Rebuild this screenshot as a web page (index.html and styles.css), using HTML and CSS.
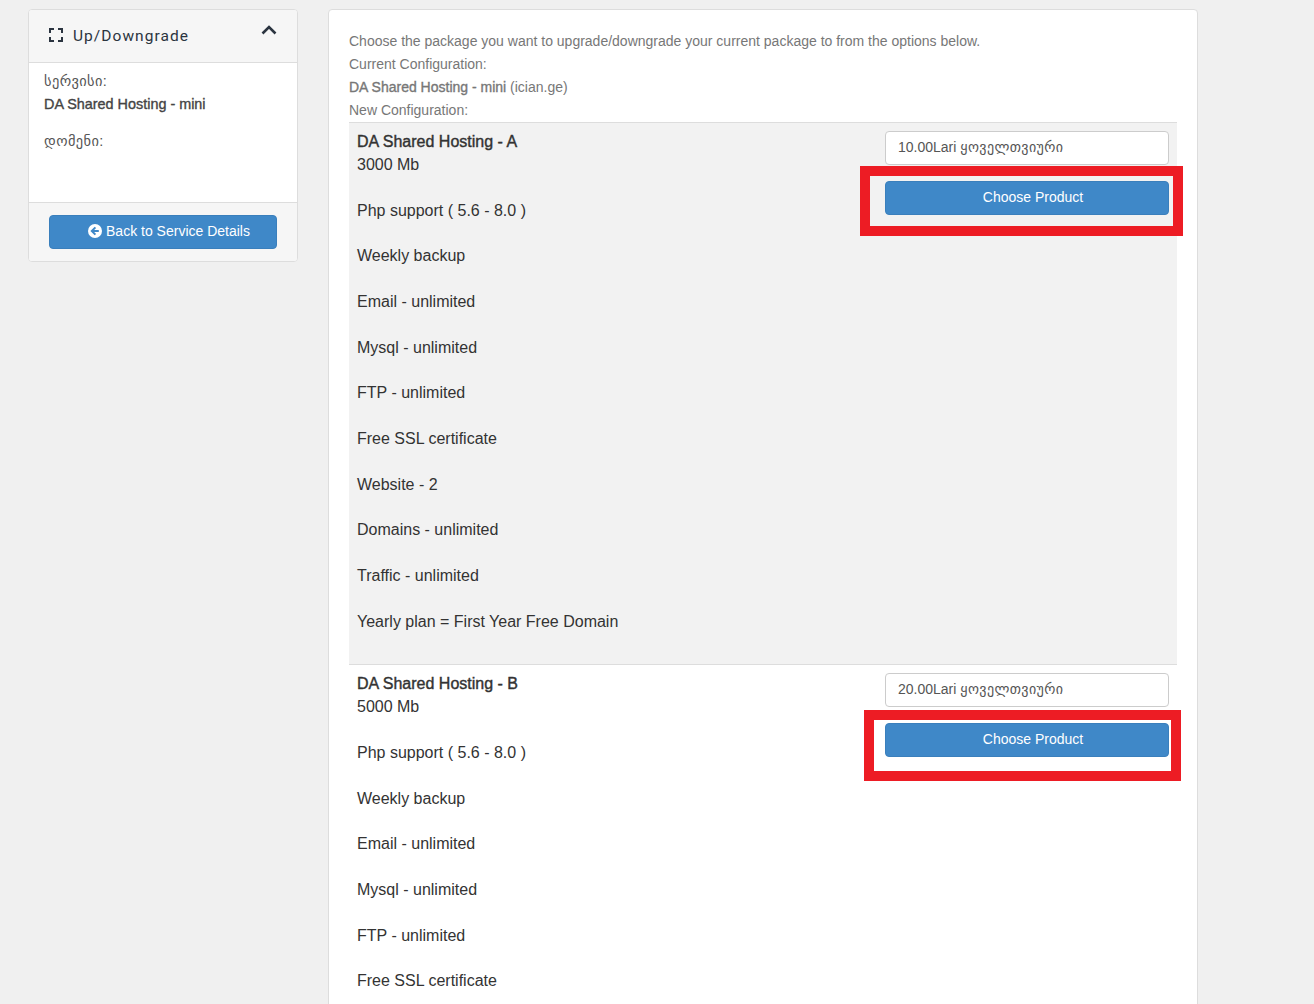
FILE: index.html
```html
<!DOCTYPE html>
<html lang="ka">
<head>
<meta charset="utf-8">
<title>Up/Downgrade</title>
<link rel="stylesheet" href="styles.css">
</head>
<body>
<div class="page">
  <aside class="side-card">
    <header class="side-head">
      <h3 class="side-title">
        <svg class="focus-icon" width="14" height="14" viewBox="0 0 14 14"><path d="M1 5V1H5M9 1H13V5M13 9V13H9M5 13H1V9" fill="none" stroke="#2b3440" stroke-width="2"/></svg>
        <span>Up/Downgrade</span>
      </h3>
      <svg class="chevron" width="16" height="10" viewBox="0 0 16 10"><path d="M1.5 8.5L8 2L14.5 8.5" fill="none" stroke="#2b3440" stroke-width="2.6"/></svg>
    </header>
    <div class="side-body">
      <div class="side-label">სერვისი:</div>
      <div class="side-value">DA Shared Hosting - mini</div>
      <div class="side-label side-gap">დომენი:</div>
    </div>
    <footer class="side-foot">
      <a class="btn side-btn">
        <svg class="back-icon" width="14" height="14" viewBox="0 0 14 14"><circle cx="7" cy="7" r="7" fill="#fff"/><path d="M7.4 3.4L3.8 7L7.4 10.6M4.2 7H10.8" fill="none" stroke="#3f88c8" stroke-width="2"/></svg>
        <span>Back to Service Details</span>
      </a>
    </footer>
  </aside>

  <main class="main-card">
    <div class="intro">
      <p>Choose the package you want to upgrade/downgrade your current package to from the options below.</p>
      <p>Current Configuration:</p>
      <p><strong>DA Shared Hosting - mini</strong> (ician.ge)</p>
      <p>New Configuration:</p>
    </div>

    <section class="plan plan-shaded">
      <div class="plan-info">
        <strong>DA Shared Hosting - A</strong><br>
        3000 Mb<br><br>
        Php support ( 5.6 - 8.0 )<br><br>
        Weekly backup<br><br>
        Email - unlimited<br><br>
        Mysql - unlimited<br><br>
        FTP - unlimited<br><br>
        Free SSL certificate<br><br>
        Website - 2<br><br>
        Domains - unlimited<br><br>
        Traffic - unlimited<br><br>
        Yearly plan = First Year Free Domain
      </div>
      <div class="plan-action">
        <div class="price-select"><span>10.00Lari <span class="geo">ყოველთვიური</span></span></div>
        <a class="btn choose-btn">Choose Product</a>
        <div class="mark mark-a"></div>
      </div>
    </section>

    <section class="plan">
      <div class="plan-info">
        <strong>DA Shared Hosting - B</strong><br>
        5000 Mb<br><br>
        Php support ( 5.6 - 8.0 )<br><br>
        Weekly backup<br><br>
        Email - unlimited<br><br>
        Mysql - unlimited<br><br>
        FTP - unlimited<br><br>
        Free SSL certificate
      </div>
      <div class="plan-action">
        <div class="price-select"><span>20.00Lari <span class="geo">ყოველთვიური</span></span></div>
        <a class="btn choose-btn">Choose Product</a>
        <div class="mark mark-b"></div>
      </div>
    </section>
  </main>
</div>
</body>
</html>
```
FILE: styles.css
```css
* { box-sizing: border-box; }
html, body { margin: 0; height: 1004px; overflow: hidden; }
body {
  background: #f0f0f0;
  color: #333;
  font-family: "Liberation Sans", "DejaVu Sans", sans-serif;
  font-size: 14px;
  line-height: 20px;
}
.page {
  display: flex;
  align-items: flex-start;
  gap: 30px;
  padding: 9px 0 0 28px;
}
.side-card {
  width: 270px;
  flex: none;
  background: #fff;
  border: 1px solid #ddd;
  border-radius: 4px;
  overflow: hidden;
}
.side-head {
  height: 53px;
  display: flex;
  justify-content: space-between;
  padding: 0 20px 0 20px;
  background: #f6f6f6;
  border-bottom: 1px solid #ddd;
}
.side-title {
  margin: 0;
  padding-bottom: 1px;
  display: flex;
  align-items: center;
  gap: 10px;
  font-family: "Roboto", sans-serif;
  font-size: 15.5px;
  font-weight: 400;
  letter-spacing: 1.05px;
  color: #2b3440;
}
.focus-icon { display: block; margin-top: -1px; }
.chevron { margin-top: 15px; }
.side-body { height: 139px; padding: 7px 15px 0; }
.side-label, .side-value { line-height: 23px; font-size: 14.4px; }
.side-label { color: #555; letter-spacing: 0.4px; }
.side-value { color: #444; font-weight: 400; -webkit-text-stroke: 0.35px #444; }
.side-gap { margin-top: 14px; }
.side-foot {
  height: 59px;
  padding: 12px 20px 0;
  background: #f6f6f6;
  border-top: 1px solid #ddd;
}
.btn {
  display: flex;
  align-items: center;
  justify-content: center;
  height: 34px;
  padding: 0 0 2px 12px;
  background: #3f88c8;
  border: 1px solid #3a7fbc;
  border-radius: 4px;
  color: #fff;
}
.back-icon { margin-right: 4px; }
.main-card {
  width: 870px;
  flex: none;
  min-height: 1100px;
  background: #fff;
  border: 1px solid #ddd;
  border-radius: 4px;
  padding: 20.065px 20px 0;
}
.intro { color: #777; }
.intro p { margin: 0; line-height: 23px; }
.intro strong { font-weight: 400; -webkit-text-stroke: 0.35px #777; }
.plan {
  display: flex;
  justify-content: space-between;
  padding: 8px 8px 30.79px;
  border-top: 1px solid #ddd;
  font-size: 16px;
  line-height: 22.84375px;
  color: #333;
}
.plan-shaded { background: #f2f2f2; }
.plan-info strong { font-weight: 400; -webkit-text-stroke: 0.4px #333; }
.plan-action { position: relative; width: 284px; }
.price-select {
  height: 34px;
  padding: 0 12px 2px;
  display: flex;
  align-items: center;
  background: #fff;
  border: 1px solid #ccc;
  border-radius: 4px;
  color: #555;
  font-size: 14px;
}
.geo { letter-spacing: 0.4px; }
.choose-btn { margin-top: 16px; font-size: 14px; }
.mark { position: absolute; border: 10px solid #ed1c24; pointer-events: none; }
.mark-a { left: -25px; top: 34.935px; width: 323px; height: 70px; }
.mark-b { left: -21px; top: 36.585px; width: 317px; height: 71px; }
```
